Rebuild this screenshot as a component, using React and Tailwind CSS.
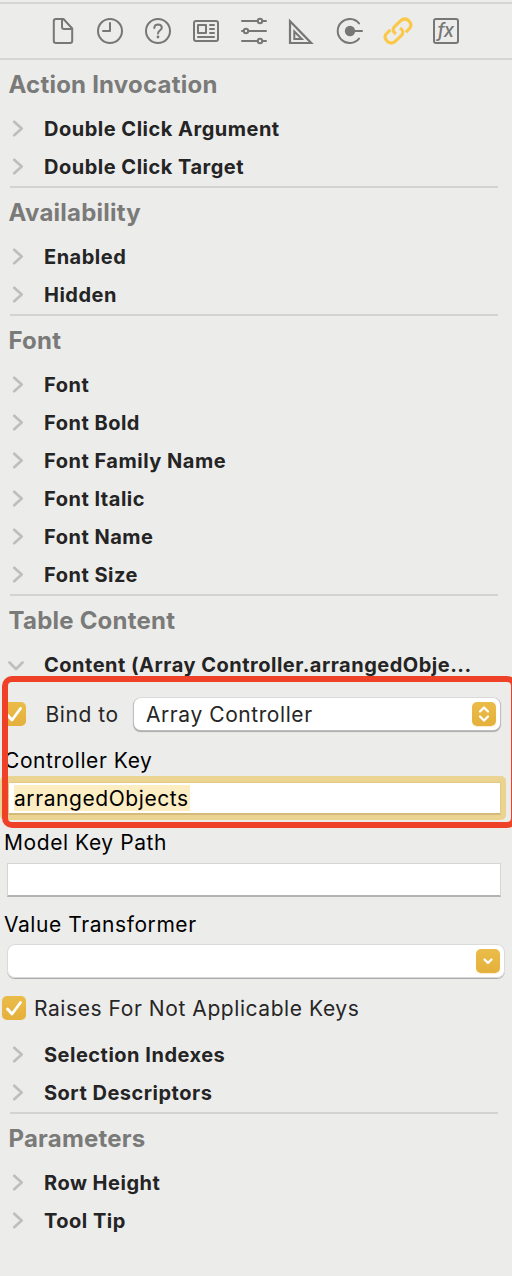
import React from "react";

const icons = [
  <path key="p" d="M62 19H56Q53.8 19 53.8 21.2V41Q53.8 43 56 43H70Q72.2 43 72.2 41V28.5L63.5 19H62V27Q62 29 64 29H72" />,
  <g key="p"><circle cx="110" cy="31" r="12" /><path d="M110 23V31H103" /></g>,
  <g key="p"><circle cx="158" cy="31" r="12" /><path d="M154.3 28Q154.5 24.6 158.2 24.6Q161.8 24.8 161.8 27.8C161.8 30.3 158 30.4 158 33.5" /><circle cx="158" cy="37" r="1.4" fill="#777" stroke="none" /></g>,
  <g key="p"><rect x="194" y="21" width="24" height="20" rx="2" /><rect x="198" y="25" width="8" height="8" /><path d="M210 25H214M210 29H214M210 33H214M198 37H214" /></g>,
  <g key="p"><path d="M242 21H257.5M262.5 21H266M242 31H243.5M248.5 31H266M242 41H257.5M262.5 41H266" /><circle cx="260" cy="21" r="2.2" /><circle cx="246" cy="31" r="2.2" /><circle cx="260" cy="41" r="2.2" /></g>,
  <g key="p" strokeLinejoin="miter"><path d="M290 21.3V43H311.2Z" strokeWidth="2.2" /><path d="M294.3 31.5V39H301.8Z" /></g>,
  <g key="p"><path d="M359 23.4A12 12 0 1 0 359 38.6M350 31H362" /><circle cx="350" cy="31" r="5.2" fill="#777" stroke="none" /></g>,
  <g key="p" stroke="#fbc84a" strokeWidth="3.2" strokeLinecap="butt"><path d="M395.9 34Q391 30.5 394.8 26.3L400.5 20.9Q404 17.5 408.2 20.2Q412.7 24 409.8 28L406 32.2" /><path d="M400.1 28Q405 31.5 401.2 35.7L395.5 41.1Q392 44.5 387.8 41.8Q383.3 38 386.2 34L390.3 29.8" /></g>,
  <g key="p"><rect x="434" y="19" width="24" height="24" rx="2" /><text x="437.6" y="37" fontSize="18.5" fontWeight="500" fontStyle="italic" fontFamily="Inter, sans-serif" fill="#777" stroke="none" letterSpacing="-1">fx</text></g>,
];
const boxes = ["46 15 32 32", "94 15 32 32", "142 15 32 32", "190 15 32 32", "238 15 32 32", "286 15 32 32", "334 15 32 32", "382 15 32 32", "430 15 32 32"];

function Toolbar() {
  return (
    <div className="h-[60px] pt-0.5">
      <div className="flex h-[58px] items-center gap-4 border-y-2 border-[#d5d5d4] pl-[46px]">
        {icons.map((icon, i) => (
          <svg key={i} className="size-8 shrink-0" viewBox={boxes[i]} fill="none" stroke="#777" strokeWidth="2" strokeLinecap="round" strokeLinejoin="round">{icon}</svg>
        ))}
      </div>
    </div>
  );
}

function Row({ label, open }) {
  return (
    <div className="flex h-[38px] items-center">
      <svg className="ml-2 mr-3 size-6 shrink-0" viewBox="0 0 24 24" fill="none" stroke="#bebebe" strokeWidth="2.7" strokeLinecap="round" strokeLinejoin="round">
        <path d={open ? "M1.5 9.5L8 16L14.5 9.5" : "M6.2 4.8L13.7 11.5L6.2 18.2"} />
      </svg>
      <span className="whitespace-nowrap text-[20px] font-bold leading-none tracking-[0.5px] text-[#242424]">{label}</span>
    </div>
  );
}

function Section({ title, last, children }) {
  return (
    <section>
      <h2 className="flex h-[50px] items-center pl-[8.5px] text-[24px] font-bold leading-none tracking-[0.22px] text-[#7a7a79]">{title}</h2>
      {children}
      {!last && <div className="ml-2.5 mr-3.5 h-0.5 bg-[#d3d3d2]" />}
    </section>
  );
}

function Check() {
  return (
    <span className="flex size-6 shrink-0 items-center justify-center rounded-[5px] bg-linear-to-b from-[#ebbc49] to-[#e5b03c]">
      <svg className="size-6" viewBox="0 0 24 24" fill="none" stroke="white" strokeWidth="2.8" strokeLinecap="round" strokeLinejoin="round"><path d="M5.5 13L10 18L18.5 6.5" /></svg>
    </span>
  );
}

function Stepper({ d }) {
  return (
    <span className="flex size-6 items-center justify-center rounded-[5px] bg-linear-to-b from-[#ebbc49] to-[#e5b03c] shadow-[0_1px_1px_#e5b03c40]">
      <svg className="size-6" viewBox="0 0 24 24" fill="none" stroke="white" strokeWidth="2.3" strokeLinecap="round" strokeLinejoin="round"><path d={d} /></svg>
    </span>
  );
}

function Binding() {
  return (
    <div className="relative h-[352px] text-[21px] leading-none tracking-[0.57px] text-black">
      <div className="flex h-[60px] items-center pl-0.5 pr-3">
        <Check />
        <span className="ml-[19.5px] w-[88.5px] whitespace-nowrap text-[#262626]">Bind to</span>
        <div className="flex h-8 flex-1 items-center justify-between rounded-[7px] bg-white pl-3 pr-1 text-[#262626] shadow-[0_0_0_0.5px_#d0d0d0,0_1px_1px_0.5px_#aaa]">
          <span>Array Controller</span>
          <Stepper d="M8 9.5L12 5.5L16 9.5M8 14.5L12 18.5L16 14.5" />
        </div>
      </div>
      <div className="flex h-8 items-center pl-1">Controller Key</div>
      <div className="mr-1.5 flex h-11 items-stretch rounded-[5px] bg-[#ebd391] pb-[5px] pl-2 pr-[5px] pt-[6px]">
        <div className="flex flex-1 items-center border border-b-2 border-[#e5c983] border-b-[#d4bb7c] bg-white pl-[5px]">
          <span className="flex h-[26px] w-44 items-center bg-[#fdedc3]">arrangedObjects</span>
        </div>
      </div>
      <div className="flex h-[43px] items-center pl-1 pt-0.5">Model Key Path</div>
      <div className="ml-[7px] mr-[11px] h-[34px] border border-b-2 border-[#d6d6d6] border-b-[#b3b3b3] bg-white" />
      <div className="flex h-[47px] items-center pl-1 pt-[7px]">Value Transformer</div>
      <div className="ml-[7px] mr-[7px] flex h-[34px] items-center justify-end rounded-[8px] bg-white pr-[5px] shadow-[inset_0_0_0_1px_#dadada,0_1px_0_#aaa]">
        <Stepper d="M8.5 10.5L12 14L15.5 10.5" />
      </div>
      <div className="mt-0.5 flex h-14 items-center pl-0.5 text-[#262626]">
        <Check />
        <span className="ml-2 whitespace-nowrap">Raises For Not Applicable Keys</span>
      </div>
      <div className="pointer-events-none absolute -top-2 left-0.5 h-[152px] w-[515px] rounded-[10px] border-[6px] border-[#ee4127]" />
    </div>
  );
}

export default function App() {
  return (
    <main className="h-[1276px] w-[512px] overflow-hidden bg-[#ececeb] font-['Inter',sans-serif]">
      <Toolbar />
      <Section title="Action Invocation">
        <Row label="Double Click Argument" />
        <Row label="Double Click Target" />
      </Section>
      <Section title="Availability">
        <Row label="Enabled" />
        <Row label="Hidden" />
      </Section>
      <Section title="Font">
        <Row label="Font" />
        <Row label="Font Bold" />
        <Row label="Font Family Name" />
        <Row label="Font Italic" />
        <Row label="Font Name" />
        <Row label="Font Size" />
      </Section>
      <Section title="Table Content">
        <Row label="Content (Array Controller.arrangedObje..." open />
        <Binding />
        <Row label="Selection Indexes" />
        <Row label="Sort Descriptors" />
      </Section>
      <Section title="Parameters" last>
        <Row label="Row Height" />
        <Row label="Tool Tip" />
      </Section>
    </main>
  );
}
